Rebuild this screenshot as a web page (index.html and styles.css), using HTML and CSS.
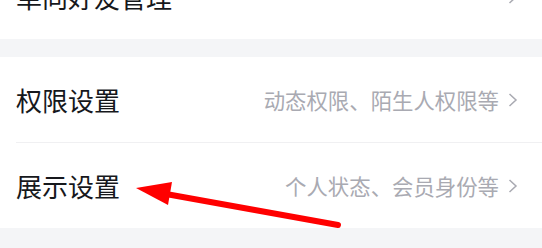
FILE: index.html
```html
<!DOCTYPE html>
<html lang="zh-CN">
<head>
  <meta charset="UTF-8">
  <meta name="viewport" content="width=device-width, initial-scale=1.0">
  <title>设置</title>
  <link rel="stylesheet" href="styles.css">
</head>
<body>
  <div class="page">
    <div class="group group-top">
      <div class="row">
        <span class="title">单向好友管理</span>
        <span class="extra">
          <svg class="chevron" viewBox="0 0 10 14"><path d="M1.5 1 L8 7 L1.5 13"/></svg>
        </span>
      </div>
    </div>
    <div class="group">
      <div class="row">
        <span class="title">权限设置</span>
        <span class="extra">
          <span class="desc">动态权限、陌生人权限等</span>
          <svg class="chevron" viewBox="0 0 10 14"><path d="M1.5 1 L8 7 L1.5 13"/></svg>
        </span>
      </div>
      <div class="row">
        <span class="title">展示设置</span>
        <span class="extra">
          <span class="desc">个人状态、会员身份等</span>
          <svg class="chevron" viewBox="0 0 10 14"><path d="M1.5 1 L8 7 L1.5 13"/></svg>
        </span>
      </div>
    </div>
  </div>

  <svg class="arrow" width="542" height="248" viewBox="0 0 542 248">
    <line x1="166" y1="194" x2="338" y2="225" stroke="#ff0000" stroke-width="6" stroke-linecap="round"/>
    <polygon points="136,188 172,182 168,205" fill="#ff0000"/>
  </svg>
</body>
</html>
```

FILE: styles.css
```css
body {
  margin: 0;
  font-family: "Noto Sans CJK SC", "Noto Sans", sans-serif;
  background: #f4f5f7;
  overflow: hidden;
}
.page {
  display: flex;
  flex-direction: column;
  gap: 18px;
  margin-top: -46px;
}
.group {
  background: #fff;
  padding-left: 16px;
}
.row {
  height: 85px;
  display: flex;
  align-items: center;
  justify-content: space-between;
  padding-right: 24px;
  border-bottom: 1px solid #f0f0f2;
}
.row:last-child {
  border-bottom: none;
}
.title {
  font-size: 26px;
  color: #16181c;
}
.extra {
  display: flex;
  align-items: center;
  gap: 9px;
}
.desc {
  font-size: 21.4px;
  color: #a9aab2;
}
.chevron {
  width: 10px;
  height: 14px;
  fill: none;
  stroke: #a9aab2;
  stroke-width: 1.5;
}
.arrow {
  position: absolute;
  left: 0;
  top: 0;
}
```
